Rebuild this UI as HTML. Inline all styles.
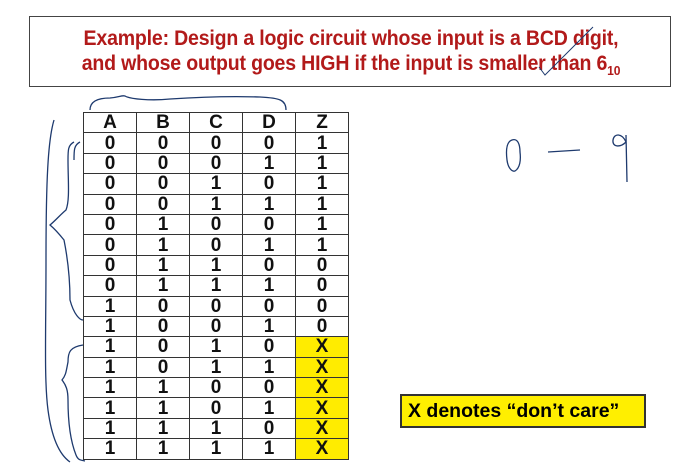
<!DOCTYPE html>
<html><head><meta charset="utf-8"><style>
body{margin:0;width:699px;height:469px;background:#fff;position:relative;overflow:hidden;font-family:"Liberation Sans",Arial,sans-serif}
.title{position:absolute;left:29px;top:16px;width:642px;height:71px;border:1.5px solid #444;box-sizing:border-box;}
.tt{position:absolute;left:0;width:642px;top:9px;color:#b21a1a;font-weight:bold;font-size:21px;text-align:center;line-height:25px;transform:scaleX(0.93);letter-spacing:-0.2px}
table{position:absolute;left:83px;top:112px;border-collapse:collapse;}
td{width:52px;height:19.4px;padding:0;border:1px solid #333;text-align:center;font-weight:bold;font-size:19px;line-height:17px;color:#111}
td span{display:inline-block;transform:scaleX(0.85)}
td.y{background:#ffec00}
.note{position:absolute;left:400px;top:394px;width:246px;height:34px;box-sizing:border-box;border:2px solid #333;background:#ffef00;font-weight:bold;font-size:19.5px;line-height:30px;padding-left:6px}
svg{position:absolute;left:0;top:0}
</style></head><body>
<div class="title"><div class="tt">Example: Design a logic circuit whose input is a BCD digit,<br>and whose output goes HIGH if the input is smaller than 6<sub style="font-size:13px">10</sub></div></div>
<table>
<tr><td>A</td><td>B</td><td>C</td><td>D</td><td>Z</td></tr>
<tr><td>0</td><td>0</td><td>0</td><td>0</td><td>1</td></tr>
<tr><td>0</td><td>0</td><td>0</td><td>1</td><td>1</td></tr>
<tr><td>0</td><td>0</td><td>1</td><td>0</td><td>1</td></tr>
<tr><td>0</td><td>0</td><td>1</td><td>1</td><td>1</td></tr>
<tr><td>0</td><td>1</td><td>0</td><td>0</td><td>1</td></tr>
<tr><td>0</td><td>1</td><td>0</td><td>1</td><td>1</td></tr>
<tr><td>0</td><td>1</td><td>1</td><td>0</td><td>0</td></tr>
<tr><td>0</td><td>1</td><td>1</td><td>1</td><td>0</td></tr>
<tr><td>1</td><td>0</td><td>0</td><td>0</td><td>0</td></tr>
<tr><td>1</td><td>0</td><td>0</td><td>1</td><td>0</td></tr>
<tr><td>1</td><td>0</td><td>1</td><td>0</td><td class="y">X</td></tr>
<tr><td>1</td><td>0</td><td>1</td><td>1</td><td class="y">X</td></tr>
<tr><td>1</td><td>1</td><td>0</td><td>0</td><td class="y">X</td></tr>
<tr><td>1</td><td>1</td><td>0</td><td>1</td><td class="y">X</td></tr>
<tr><td>1</td><td>1</td><td>1</td><td>0</td><td class="y">X</td></tr>
<tr><td>1</td><td>1</td><td>1</td><td>1</td><td class="y">X</td></tr>
</table>
<div class="note">X denotes “don’t care”</div>
<svg width="699" height="469" fill="none" stroke="#1e3a6e" stroke-width="1.3">
<path d="M90 110 C90 100 100 98 110 98 C120 97 122 95 125 96 C130 99 150 101 170 99 C200 97 230 96 260 97 C280 98 286 100 286 110"/>
<path d="M74 142 C68 145 68 150 68 160 C68 180 70 200 66 210 C60 215 56 220 50 225 C56 230 60 235 64 240 C68 260 70 280 70 300 C74 315 80 320 83 320"/>
<path d="M80 142 C74 145 74 150 74 160"/>
<path d="M83 345 C70 347 68 352 68 362 C66 372 66 375 62 380 C66 385 68 390 68 400 C68 420 70 440 76 455 C78 460 80 460 85 461"/>
<path d="M54 120 C48 140 46 180 46 260 C46 330 44 380 48 410 C52 440 60 455 70 462"/>
<path d="M512 140 C506 142 506 152 507 160 C508 168 512 172 515 171 C520 168 521 160 520 152 C520 145 518 138 512 140"/>
<path d="M548 152 L580 150"/>
<path d="M626 142 C622 133 614 133 613 140 C612 147 620 148 626 142 M626 135 L627 182"/>
<path d="M539 67 L545 75 L593 27" stroke-width="1"/>
</svg>
</body></html>
